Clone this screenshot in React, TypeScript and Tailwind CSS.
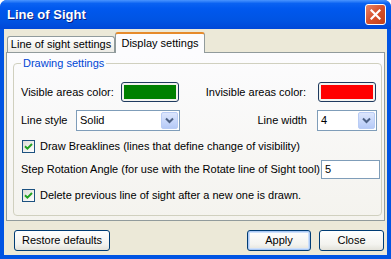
import React from 'react';

const Checkbox = ({ checked }: { checked: boolean }) => (
  <span className="w-[13px] h-[13px] shrink-0 border border-[#1C5180] bg-[linear-gradient(135deg,#DCDCD7,#FFFFFF)] flex items-center justify-center">
    {checked && (
      <svg width="9" height="9" viewBox="0 0 9 9">
        <path d="M1 4.2 L3.4 6.6 L8 2" fill="none" stroke="#21A121" strokeWidth="2" />
      </svg>
    )}
  </span>
);

const Combo = ({ value, width }: { value: string; width: string }) => (
  <div className={`${width} h-[21px] shrink-0 border border-[#7F9DB9] bg-white flex items-center`}>
    <span className="flex-1 pl-[3px]">{value}</span>
    <span className="w-[17px] h-[17px] mr-[1px] rounded-[2px] border border-[#B9CCF5] bg-[linear-gradient(to_bottom,#DCE6FD,#B6CAF7)] flex items-center justify-center">
      <svg width="9" height="7" viewBox="0 0 9 7">
        <path d="M1 1.5 L4.5 5 L8 1.5" fill="none" stroke="#4D6185" strokeWidth="2" />
      </svg>
    </span>
  </div>
);

const Swatch = ({ color }: { color: string }) => (
  <div className="w-[58px] h-[20px] shrink-0 rounded-[3px] border border-[#1F3A5F] bg-[#F2F2EE] p-[2px]">
    <div className="w-full h-full" style={{ backgroundColor: color }} />
  </div>
);

const XpButton = ({ label, width, isDefault }: { label: string; width: string; isDefault?: boolean }) => (
  <button
    className={`${width} h-[21px] rounded-[3px] border border-[#003C74] bg-[linear-gradient(to_bottom,#FFFFFF,#F3F3EF_70%,#E3E2DA)] text-black text-[11px] ${
      isDefault ? 'shadow-[inset_0_0_0_1px_#A9C8F5,inset_0_0_0_2px_#CEE0FA]' : ''
    }`}
  >
    {label}
  </button>
);

export default function App() {
  return (
    <div className="w-[391px] h-[259px] bg-white font-['Liberation_Sans',Arial,sans-serif] text-[11px] text-black leading-[13px]">
      <div className="w-full h-full rounded-t-[7px] bg-[#0054E3] flex flex-col overflow-hidden">
        {/* Title bar */}
        <div className="h-[29px] shrink-0 flex items-center justify-between pl-[7px] pr-[5px] bg-[linear-gradient(to_bottom,#4A95FF_0%,#0A62F2_12%,#0058EE_30%,#0054E3_70%,#0048D8_100%)]">
          <span className="text-white font-bold text-[13px] [text-shadow:1px_1px_0_#0A1F80]">Line of Sight</span>
          <span className="w-[21px] h-[21px] rounded-[3px] border border-white bg-[linear-gradient(135deg,#E9866A,#D6502C_50%,#C2401A)] flex items-center justify-center">
            <svg width="11" height="11" viewBox="0 0 11 11">
              <path d="M1.5 1.5 L9.5 9.5 M9.5 1.5 L1.5 9.5" stroke="white" strokeWidth="2.2" strokeLinecap="square" />
            </svg>
          </span>
        </div>

        {/* Body */}
        <div className="flex-1 mx-[4px] mb-[4px] bg-[#ECE9D8] flex flex-col">
          {/* Tabs */}
          <div className="h-[23px] shrink-0 flex items-end pl-[3px]">
            <div className="w-[108px] h-[16px] rounded-t-[3px] border border-b-0 border-[#919B9C] bg-[linear-gradient(to_bottom,#FFFFFF,#ECEBE5)] flex items-center justify-center">
              Line of sight settings
            </div>
            <div className="relative z-10 -mb-px w-[90px] h-[21px] rounded-t-[3px] border-x border-[#919B9C] border-t-2 border-t-[#E68B2C] bg-[#FCFCFE] flex items-center justify-center">
              Display settings
            </div>
          </div>

          {/* Tab panel */}
          <div className="h-[169px] shrink-0 mx-[2px] border border-[#919B9C] bg-[linear-gradient(to_bottom,#FCFCFE,#F4F3EE)] px-[6px] pt-[4px]">
            <fieldset className="h-[159px] ml-[0px] mr-[-4px] rounded-[4px] border border-[#D0D0BF] px-0">
              <legend className="ml-[7px] px-[2px] text-[#0046D5]">Drawing settings</legend>

              {/* Color row */}
              <div className="mt-[12px] h-[20px] flex items-center pl-[7px] pr-[5px]">
                <span className="w-[100px]">Visible areas color:</span>
                <Swatch color="#008000" />
                <span className="ml-auto mr-[12px]">Invisible areas color:</span>
                <Swatch color="#FF0000" />
              </div>

              {/* Combo row */}
              <div className="mt-[8px] h-[21px] flex items-center pl-[7px] pr-[4px]">
                <span className="w-[55px]">Line style</span>
                <Combo value="Solid" width="w-[104px]" />
                <span className="ml-auto mr-[10px]">Line width</span>
                <Combo value="4" width="w-[60px]" />
              </div>

              {/* Breaklines */}
              <div className="mt-[9px] h-[13px] flex items-center pl-[8px] gap-[5px]">
                <Checkbox checked />
                <span>Draw Breaklines (lines that define change of visibility)</span>
              </div>

              {/* Step rotation */}
              <div className="mt-[7px] h-[19px] flex items-center pl-[7px] pr-[1px]">
                <span>Step Rotation Angle (for use with the Rotate line of Sight tool)</span>
                <div className="ml-auto w-[59px] h-[19px] border border-[#7F9DB9] bg-white pl-[3px] flex items-center">5</div>
              </div>

              {/* Delete previous */}
              <div className="mt-[10px] h-[13px] flex items-center pl-[8px] gap-[5px]">
                <Checkbox checked />
                <span>Delete previous line of sight after a new one is drawn.</span>
              </div>
            </fieldset>
          </div>

          {/* Buttons */}
          <div className="mt-[9px] flex items-center pl-[10px] pr-[3px]">
            <XpButton label="Restore defaults" width="w-[96px]" />
            <div className="ml-auto flex gap-[8px]">
              <XpButton label="Apply" width="w-[64px]" isDefault />
              <XpButton label="Close" width="w-[65px]" />
            </div>
          </div>
        </div>
      </div>
    </div>
  );
}
